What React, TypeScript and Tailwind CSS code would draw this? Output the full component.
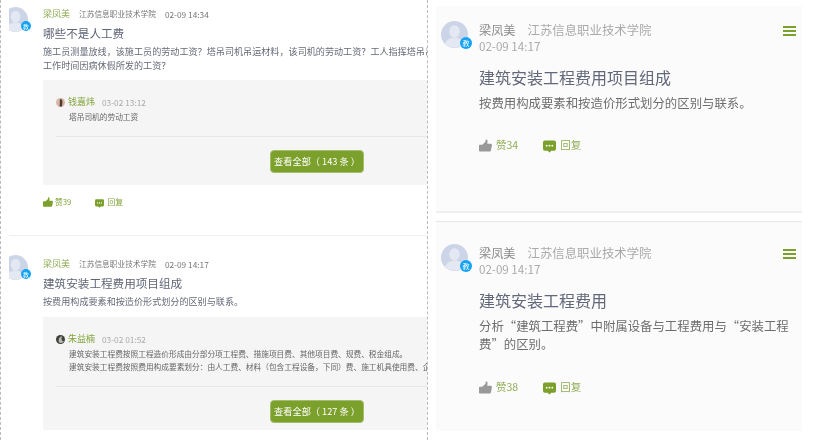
import React from 'react';

const FONT = "font-['Noto_Sans_CJK_SC','Liberation_Sans',sans-serif]";

const Avatar: React.FC<{ size: number }> = ({ size }) => (
    <svg width={size} height={size} viewBox="0 0 26 26" className="block shrink-0">
        <circle cx="13" cy="13" r="13" fill="#ccd5e8" />
        <ellipse cx="13" cy="10" rx="5" ry="6" fill="#e4e8f2" />
        <path d="M4 22c1-4 5-5 7-6h4c2 1 6 2 7 6a13 13 0 0 1-18 0z" fill="#e4e8f2" />
    </svg>
);

const MiniAvatar: React.FC<{ dark?: boolean }> = ({ dark }) => (
    <svg width="9" height="9" viewBox="0 0 9 9" className="block shrink-0">
        <circle cx="4.5" cy="4.5" r="4.5" fill={dark ? '#3f403b' : '#d9b6a6'} />
        {dark
            ? <path d="M6.5 1.2a4 4 0 0 0-3 6.5 4.5 4.5 0 0 0 4.6-1.2 3 3 0 0 1-1.6-5.3z" fill="#b9bab2" />
            : <path d="M4.5 1C6 1 6.6 2.5 6.4 4.5L6 8.5H3.6L3.8 4C3.8 2.6 3.8 1.6 4.5 1z" fill="#4d3c36" />}
    </svg>
);

const Badge: React.FC<{ className: string }> = ({ className }) => (
    <span className={`absolute flex items-center justify-center rounded-full bg-[#12a3f5] text-white ${className}`}>教</span>
);

const Thumb: React.FC<{ className: string; color: string }> = ({ className, color }) => (
    <svg viewBox="0 0 14 13" className={className}>
        <path d="M1 5.6h2.6L7 2.4V.9C7 .3 7.5 0 8 0c.9.1 1.3 1 1.2 1.9L8.9 4.6h3.6c1 0 1.6.9 1.4 1.8l-1 5.2c-.2.7-.7 1.4-1.4 1.4H1a1 1 0 0 1-1-1V6.6a1 1 0 0 1 1-1z" fill={color} />
    </svg>
);

const Bubble: React.FC<{ className: string }> = ({ className }) => (
    <svg viewBox="0 0 14 13" className={className}>
        <path d="M2 0h10a2 2 0 0 1 2 2v7a2 2 0 0 1-2 2H9l-2 2-2-2H2a2 2 0 0 1-2-2V2a2 2 0 0 1 2-2z" fill="#7ca02c" />
        <circle cx="4" cy="5.6" r="1" fill="#fff" />
        <circle cx="7" cy="5.6" r="1" fill="#fff" />
        <circle cx="10" cy="5.6" r="1" fill="#fff" />
    </svg>
);

const Reply: React.FC<{ name: string; time: string; dark?: boolean; lines: string[]; count: number; box: string }> = ({ name, time, dark, lines, count, box }) => (
    <div className={`bg-[#f5f5f5] pl-[13px] pt-[16px] ${box}`}>
        <div className="flex items-center h-[12px]">
            <MiniAvatar dark={dark} />
            <span className="ml-[3px] text-[9px] leading-[12px] text-[#83a53c]">{name}</span>
            <span className="ml-[7px] text-[8.3px] leading-[12px] text-[#aaa]">{time}</span>
        </div>
        <div className="mt-[2px] pl-[13px] text-[7.7px] leading-[13px] text-[#666] whitespace-nowrap">
            {lines.map(l => <p key={l}>{l}</p>)}
        </div>
        <div className="mt-[13px] h-px bg-[#e8e8e8]" />
        <div className="mt-[13px] flex pl-[214px]">
            <button className="w-[94px] h-[23px] rounded-[4px] bg-[#7ca02c] border border-[#a3bd6b] text-white text-[9.2px] whitespace-nowrap">查看全部（ {count} 条 ）</button>
        </div>
    </div>
);

const LeftPost: React.FC<{ time: string; title: string; desc: string[]; children: React.ReactNode; footer?: boolean; top: string; avatarTop: string }> = ({ time, title, desc, children, footer, top, avatarTop }) => (
    <div className={`flex ${top}`}>
        <div className={`relative w-[34px] shrink-0 h-[26px] ml-[8px] ${avatarTop}`}>
            <div className="w-[19px] overflow-hidden"><div className="-ml-[6px]"><Avatar size={25} /></div></div>
            <Badge className="left-[12px] top-[14px] size-[10px] text-[6px]" />
        </div>
        <div className="flex-1 min-w-0">
            <div className="flex items-center h-[12px] mt-[1px] whitespace-nowrap">
                <span className="text-[9px] text-[#8fac55]">梁凤美</span>
                <span className="ml-[9px] text-[7.7px] text-[#777]">江苏信息职业技术学院</span>
                <span className="ml-[9px] text-[8.3px] text-[#777]">{time}</span>
            </div>
            <h3 className="mt-[4px] text-[11.6px] leading-[18px] text-[#5f6475] whitespace-nowrap">{title}</h3>
            <div className="mt-[2px] text-[9.1px] leading-[14px] text-[#666a78] whitespace-nowrap">
                {desc.map(d => <p key={d}>{d}</p>)}
            </div>
            {children}
            {footer && (
                <div className="mt-[11px] flex items-center h-[12px] text-[7.8px] text-[#83a53c]">
                    <Thumb className="w-[10px] h-[10px]" color="#7ca02c" />
                    <span className="ml-[2px]">赞39</span>
                    <Bubble className="ml-[24px] w-[9px] h-[9px] mt-[2px]" />
                    <span className="ml-[3px]">回复</span>
                </div>
            )}
        </div>
    </div>
);

const RightPost: React.FC<{ title: string; desc: React.ReactNode; likes: number; h: string; pt: string; descH: string }> = ({ title, desc, likes, h, pt, descH }) => (
    <div className={`relative bg-[#fbfbfb] pl-[5px] ${pt} ${h}`}>
        <div className="flex">
            <div className="relative shrink-0 size-[27px]">
                <Avatar size={27} />
                <Badge className="left-[19px] top-[16px] size-[12px] text-[7px]" />
            </div>
            <div className="ml-[11px] flex-1 min-w-0 pr-[13px]">
                <div className="flex items-center justify-between h-[16px]">
                    <div className="whitespace-nowrap leading-[16px]">
                        <span className="text-[12.2px] text-[#8a8a8a]">梁凤美</span>
                        <span className="ml-[12px] text-[12.4px] text-[#aaa]">江苏信息职业技术学院</span>
                    </div>
                    <div className="flex flex-col gap-[2px] w-[13px] mr-[-7px] mt-[4px]">
                        <span className="h-[2px] bg-[#7ca02c]" />
                        <span className="h-[2px] bg-[#7ca02c]" />
                        <span className="h-[2px] bg-[#7ca02c]" />
                    </div>
                </div>
                <div className="mt-[1px] text-[11.6px] leading-[16px] text-[#aaa]">02-09 14:17</div>
            </div>
        </div>
        <div className="pl-[38px] pr-[11px]">
            <h3 className="mt-[11px] text-[16px] leading-[24px] text-[#62677a]">{title}</h3>
            <div className={`mt-[5px] text-[12.4px] leading-[18px] text-[#6d6d6d] ${descH}`}>{desc}</div>
            <div className="flex items-center h-[14px] text-[10.5px] text-[#8fac55]">
                <Thumb className="w-[13px] h-[13px]" color="#999" />
                <span className="ml-[4px]">赞{likes}</span>
                <Bubble className="ml-[25px] w-[13px] h-[13px] mt-[2px]" />
                <span className="ml-[4px]">回复</span>
            </div>
        </div>
    </div>
);

export default function App() {
    return (
        <div className={`w-[828px] h-[440px] bg-white flex overflow-hidden blur-[0.35px] ${FONT}`}>
            <div className="w-[428px] h-[440px] shrink-0 overflow-hidden border-x border-dashed border-[#bbb]">
                <LeftPost
                    top="pt-[7px]"
                    avatarTop=""
                    time="02-09 14:34"
                    title="哪些不是人工费"
                    desc={['施工员测量放线，该施工员的劳动工资？塔吊司机吊运材料，该司机的劳动工资？工人指挥塔吊吊运材料的工资？工人在', '工作时间因病休假所发的工资？']}
                    footer
                >
                    <Reply name="钱嘉炜" time="03-02 13:12" lines={['塔吊司机的劳动工资']} count={143} box="mt-[8px] h-[105px]" />
                </LeftPost>
                <div className="mt-[27px] ml-[8px] h-px bg-[#f0f0f0]" />
                <LeftPost
                    top="pt-[21px]"
                    avatarTop="-mt-[2px]"
                    time="02-09 14:17"
                    title="建筑安装工程费用项目组成"
                    desc={['按费用构成要素和按造价形式划分的区别与联系。']}
                >
                    <Reply
                        name="朱益楠"
                        time="03-02 01:52"
                        dark
                        lines={['建筑安装工程费按照工程造价形成由分部分项工程费、措施项目费、其他项目费、规费、税金组成。', '建筑安装工程费按照费用构成要素划分：由人工费、材料（包含工程设备，下同）费、施工机具使用费、企业管理费']}
                        count={127}
                        box="mt-[9px] h-[113px]"
                    />
                </LeftPost>
            </div>
            <div className="ml-[8px] w-[366px] pt-[6px]">
                <RightPost
                    title="建筑安装工程费用项目组成"
                    desc="按费用构成要素和按造价形式划分的区别与联系。"
                    likes={34}
                    h="h-[205px]"
                    pt="pt-[15px]"
                    descH="h-[44px]"
                />
                <div className="h-[2px] bg-[#efefef]" />
                <div className="mt-[8px] h-px bg-[#e6e6e6]" />
                <RightPost
                    title="建筑安装工程费用"
                    desc={<>分析“建筑工程费”中附属设备与工程费用与“安装工程费”的区别。</>}
                    likes={38}
                    h="h-[209px]"
                    pt="pt-[22px]"
                    descH="h-[63px]"
                />
            </div>
        </div>
    );
}
